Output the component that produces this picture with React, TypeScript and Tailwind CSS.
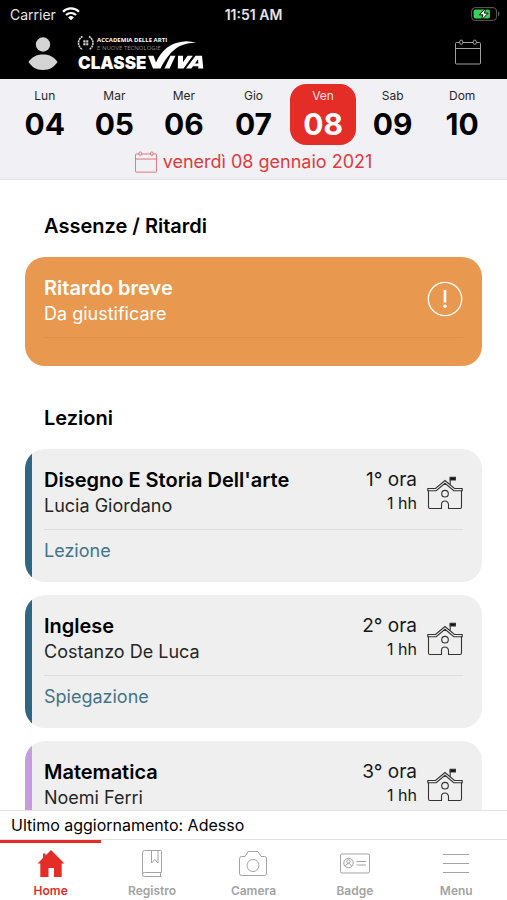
import type { ReactNode } from "react";

type Lesson = {
  subject: string;
  teacher: string;
  hour: string;
  kind?: string;
  border: string;
};

const days = [
  { name: "Lun", number: "04" },
  { name: "Mar", number: "05" },
  { name: "Mer", number: "06" },
  { name: "Gio", number: "07" },
  { name: "Ven", number: "08", active: true },
  { name: "Sab", number: "09" },
  { name: "Dom", number: "10" },
];

const lessons: Lesson[] = [
  {
    subject: "Disegno E Storia Dell'arte",
    teacher: "Lucia Giordano",
    hour: "1° ora",
    kind: "Lezione",
    border: "border-[#2f6683]",
  },
  {
    subject: "Inglese",
    teacher: "Costanzo De Luca",
    hour: "2° ora",
    kind: "Spiegazione",
    border: "border-[#2f6683]",
  },
  {
    subject: "Matematica",
    teacher: "Noemi Ferri",
    hour: "3° ora",
    border: "border-[#c79be0]",
  },
];

function CalendarIcon({ className }: { className: string }) {
  return (
    <svg viewBox="0 0 26 26" fill="none" stroke="currentColor" className={className}>
      <path d="M4.5 3.5H1.5Q.5 3.5.5 4.5V24Q.5 25 1.5 25H24.5Q25.5 25 25.5 24V4.5Q25.5 3.5 24.5 3.5H21.5M8 3.5H18M.5 9.5H25.5" />
      <ellipse cx="6.2" cy="3.2" rx="1.6" ry="2.2" />
      <ellipse cx="19.8" cy="3.2" rx="1.6" ry="2.2" />
    </svg>
  );
}

function SchoolIcon() {
  return (
    <svg viewBox="0 0 36 34" fill="none" stroke="#333" strokeWidth="1.1" className="w-9 shrink-0">
      <path d="M1.5 14.5V31Q1.5 32.5 3 32.5H14.5V28.5A3.5 3.5 0 0 1 21.5 28.5V32.5H33Q34.5 32.5 34.5 31V14.5" />
      <path d="M.8 12.5H8.5L18 4.5 27.5 12.5H35.2V14.7H26.8L18 7.3 9.2 14.7H.8Z" />
      <circle cx="18" cy="17.7" r="3.3" />
      <path d="M23.2 8.5V1.5" />
      <path d="M23.2 1.3H28.4V4H23.2Z" fill="#111" />
    </svg>
  );
}

function Logo() {
  return (
    <svg viewBox="76 33 130 38" fill="white" className="w-[130px] overflow-visible" role="img" aria-label="ClasseViva">
      <g fill="none" stroke="#d4d4d4">
        <path d="M82.5 36.5A7.3 7.3 0 0 0 82.5 49.5M89 36.5A7.3 7.3 0 0 1 89 49.5" strokeWidth="1.6" strokeDasharray="2 .6" />
        <rect x="83.3" y="40.3" width="5" height="5" fill="#d4d4d4" stroke="none" />
        <path d="M85.8 40V46M83 42.8H89" stroke="black" strokeWidth=".7" />
      </g>
      <text x="97" y="42" className="font-['Open_Sans'] text-[6px] font-bold">
        ACCADEMIA DELLE ARTI
      </text>
      <text x="97" y="49.5" fill="#8c8c8c" className="font-['Open_Sans'] text-[6px]">
        E NUOVE TECNOLOGIE
      </text>
      <text x="78" y="68.5" className="font-[Inter] text-[17px] font-black">
        CLASSE
      </text>
      <path d="M148 55.8H153.5L156 62.5C161 51 170 42 186 41.3Q192 41.3 196 43C180 42.5 170 50 160.5 68.5H153Z" />
      <path d="M170.5 55.8H175.5L169.5 68.5H164.5Z" />
      <path d="M178 55.8H183L183 62.3 187.5 55.8H192.8L183.5 68.5H177.8Z" />
      <path fillRule="evenodd" d="M195.5 55.8H202L203.3 68.5H198.3V66.3H193L191.4 68.5H186ZM198 59.2 195 63.5H198.3Z" />
    </svg>
  );
}

function StatusBar() {
  return (
    <div className="grid h-7 grid-cols-3 items-center px-2.5 text-[14px] text-neutral-200">
      <div className="flex items-center gap-1.5">
        <span>Carrier</span>
        <svg viewBox="0 0 18 14" fill="none" stroke="white" strokeWidth="2.2" className="w-[18px]">
          <path d="M1 4.7A11.3 11.3 0 0 1 17 4.7M4 8A7.2 7.2 0 0 1 14 8" />
          <path d="M9 13.3 6.2 10.4A4 4 0 0 1 11.8 10.4Z" fill="white" stroke="none" />
        </svg>
      </div>
      <div className="text-center font-semibold">11:51 AM</div>
      <svg viewBox="0 0 30 14" className="-mr-1 w-[30px] justify-self-end">
        <rect x=".6" y=".6" width="25" height="12.8" rx="3.6" fill="none" stroke="#5c5c5c" />
        <rect x="2.6" y="2.6" width="16.4" height="8.8" rx="2" fill="#34d058" />
        <path d="M27 4.3Q30 7 27 9.7Z" fill="#5c5c5c" />
        <path d="M14.8 1.2 8.2 7.8H12L10.4 13 17.2 6.2H13.4Z" fill="white" stroke="black" strokeWidth=".9" />
      </svg>
    </div>
  );
}

function Header() {
  return (
    <header className="bg-black font-[Inter,sans-serif]">
      <StatusBar />
      <div className="flex h-[51px] items-center pr-[26px] pb-1 pl-7">
        <button aria-label="Profilo">
          <svg viewBox="0 0 30 34" fill="#d4d4d4" className="mt-1 w-[30px]">
            <circle cx="15" cy="7.5" r="7.2" />
            <path d="M.5 25C4 20 8 17.5 15 17.5S26 20 29.5 25C26 30 22 33 15 33S4 30 .5 25Z" />
          </svg>
        </button>
        <div className="ml-[18px]">
          <Logo />
        </div>
        <button aria-label="Calendario" className="ml-auto text-neutral-400">
          <CalendarIcon className="w-[26px]" />
        </button>
      </div>
    </header>
  );
}

function WeekStrip() {
  return (
    <section className="border-b border-[#e2e2e5] bg-[#f1f0f5] px-2.5 pt-[5px] pb-1">
      <div className="grid grid-cols-7">
        {days.map((day) => (
          <button
            key={day.number}
            className={
              day.active
                ? "mx-0.5 flex h-[61px] flex-col items-center rounded-2xl bg-[#e52d27] pt-1 text-white"
                : "mx-0.5 flex h-[61px] flex-col items-center pt-1 text-black"
            }
          >
            <span className="text-xs leading-4 opacity-85">{day.name}</span>
            <span className="text-[30px] leading-10 font-bold">{day.number}</span>
          </button>
        ))}
      </div>
      <div className="mt-1 flex items-center justify-center gap-1.5 text-[18px] leading-[26px] text-[#dc3c3c]">
        <CalendarIcon className="w-[22px] opacity-80" />
        venerdì 08 gennaio 2021
      </div>
    </section>
  );
}

function AbsenceCard() {
  return (
    <div className="rounded-[20px] bg-[#e8994f] px-[19px] pt-[18px] pb-7 text-white">
      <div className="flex items-center justify-between">
        <div>
          <h3 className="text-xl leading-[26px] font-semibold">Ritardo breve</h3>
          <div className="text-[18px] leading-[26px]">Da giustificare</div>
        </div>
        <svg viewBox="0 0 36 36" fill="none" stroke="white" className="mb-1 w-9">
          <circle cx="18" cy="18" r="16.7" strokeWidth="1.3" />
          <path d="M18 10V20.5" strokeWidth="2.6" strokeLinecap="round" />
          <circle cx="18" cy="25.2" r="1.8" fill="white" stroke="none" />
        </svg>
      </div>
      <div className="mt-2.5 border-t border-[#df904a]" />
    </div>
  );
}

function LessonCard({ lesson }: { lesson: Lesson }) {
  return (
    <div className="overflow-hidden rounded-[20px] bg-[#efefef]">
      <div className={`border-l-[7px] pt-[18px] pr-[19px] pb-[18px] pl-3 ${lesson.border}`}>
        <div className="flex items-center">
          <div className="flex-1">
            <h3 className="text-xl leading-[26px] font-semibold text-black">{lesson.subject}</h3>
            <div className="text-[18px] leading-[26px] text-neutral-800">{lesson.teacher}</div>
          </div>
          <div className="mr-2.5 self-start text-right text-neutral-900">
            <div className="text-[19px] leading-[26px]">{lesson.hour}</div>
            <div className="text-base leading-5">1 hh</div>
          </div>
          <SchoolIcon />
        </div>
        <div className="mt-2.5 min-h-[35px] border-t border-[#dedede] pt-2 text-[18px] leading-[26px] text-[#437489]">
          {lesson.kind}
        </div>
      </div>
    </div>
  );
}

function Tab({ label, active, children }: { label: string; active?: boolean; children: ReactNode }) {
  return (
    <button
      className={
        active
          ? "flex flex-col items-center border-t-[3px] border-[#e52d27] pt-1.5 text-[#e52d27]"
          : "flex flex-col items-center border-t-[3px] border-transparent pt-1.5 text-[#a3a3a3]"
      }
    >
      <svg viewBox="0 0 30 30" fill="none" stroke="currentColor" className="w-[30px]">
        {children}
      </svg>
      <span className="mt-1 text-xs leading-4 font-semibold">{label}</span>
    </button>
  );
}

function TabBar() {
  return (
    <nav className="grid h-[60px] grid-cols-5 bg-white">
      <Tab label="Home" active>
        <path
          d="M15 1 28.5 14.5H25.7V28H18V19H12.5V28H4.3V14.5H1.5L7 9V4.5H9.5V6.5Z"
          fill="currentColor"
          stroke="none"
        />
      </Tab>
      <Tab label="Registro">
        <path d="M24.5 23.5V2.5Q24.5 1.5 23.5 1.5H7.5Q5.5 1.5 5.5 3.5V25.5Q5.5 27.5 7.5 27.5H24.5M24.5 23.5H7.5Q5.5 23.5 5.5 25.5M23.5 23.5V27.5" />
        <path d="M14.5 1.5V14L17.7 10.5 21 14V1.5" />
      </Tab>
      <Tab label="Camera">
        <path d="M3.5 7.5H7L10 2.5H20L23 7.5H26.5Q28.5 7.5 28.5 9.5V24.5Q28.5 26.5 26.5 26.5H3.5Q1.5 26.5 1.5 24.5V9.5Q1.5 7.5 3.5 7.5Z" />
        <circle cx="15" cy="16.5" r="6" />
      </Tab>
      <Tab label="Badge">
        <rect x=".5" y="5" width="29" height="19" rx="1.5" />
        <circle cx="8.5" cy="14" r="4.7" />
        <circle cx="8.5" cy="12.5" r="1.7" />
        <path d="M5.2 17.3 7.3 14.7H9.7L11.8 17.3M16.5 12.5H26M16.5 16H26" />
      </Tab>
      <Tab label="Menu">
        <path d="M2 5.5H28M2 14.5H28M2 23.5H28" strokeWidth="1.2" />
      </Tab>
    </nav>
  );
}

function App() {
  return (
    <div className="flex h-dvh flex-col bg-white font-[Inter,sans-serif] text-black">
      <Header />
      <WeekStrip />
      <main className="min-h-0 flex-1 overflow-hidden px-[25px]">
        <h2 className="mt-[33px] mb-[18px] pl-[19px] text-xl leading-[26px] font-semibold">Assenze / Ritardi</h2>
        <AbsenceCard />
        <h2 className="mt-[39px] mb-[18px] pl-[19px] text-xl leading-[26px] font-semibold">Lezioni</h2>
        <div className="flex flex-col gap-[13px]">
          {lessons.map((lesson) => (
            <LessonCard key={lesson.subject} lesson={lesson} />
          ))}
        </div>
      </main>
      <div className="border-y border-[#e2e2e2] bg-white px-[11px] text-base leading-7">
        Ultimo aggiornamento: Adesso
      </div>
      <TabBar />
    </div>
  );
}

export default App;
